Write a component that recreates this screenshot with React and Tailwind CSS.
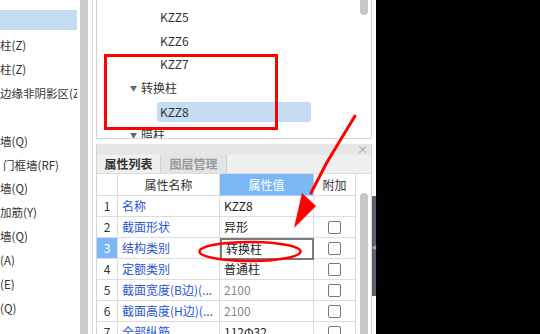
export default function App() {
  const leftItems = ["", "柱(Z)", "柱(Z)", "边缘非阴影区(Z", "", "墙(Q)", "门框墙(RF)", "墙(Q)", "加筋(Y)", "墙(Q)", "(A)", "(E)", "(Q)"];
  const rows = [
    { n: "1", name: "名称", val: "KZZ8", cb: false },
    { n: "2", name: "截面形状", val: "异形", cb: true },
    { n: "3", name: "结构类别", val: "转换柱", cb: true, sel: true },
    { n: "4", name: "定额类别", val: "普通柱", cb: true },
    { n: "5", name: "截面宽度(B边)(...", val: "2100", cb: true, gray: true },
    { n: "6", name: "截面高度(H边)(...", val: "2100", cb: true, gray: true },
    { n: "7", name: "全部纵筋", val: "112Φ32", cb: true },
  ];
  return (
    <div className="relative w-[540px] h-[334px] overflow-hidden bg-black font-['Noto_Sans_CJK_SC','Noto_Sans',sans-serif] text-[12px] text-[#333]">
      <div className="flex w-[376px] h-[334px] bg-white">
        {/* left list */}
        <div className="w-[80px] h-full overflow-hidden pt-[10px]">
          <div className="h-[23.2px] w-[77px]">
            <div className="h-[20px] w-full bg-[#c5dcf2]" />
          </div>
          {leftItems.slice(1).map((t, i) => (
            <div key={i} className="h-[23.9px] flex items-center w-[77px] overflow-hidden">
              <div className={`whitespace-nowrap leading-[18px] text-[11.5px] ${t.startsWith("门") ? "pl-[3px]" : ""}`}>
                {t}
              </div>
            </div>
          ))}
        </div>
        <div className="w-[8px] h-full bg-[#cbcbcb]" />
        <div className="w-[4px] h-full" />
        <div className="w-[4px] h-full border-l border-[#dcdcdc]" />
        {/* main */}
        <div className="w-[276px] h-full flex flex-col">
          {/* tree panel */}
          <div className="relative h-[139px] border-l border-r border-b border-[#d4d4d4] pt-[5px] overflow-hidden">
            <div className="absolute right-[3px] top-0 w-[8px] h-[15px] rounded-b-full bg-[#c8c8c8]" />
            {["KZZ5", "KZZ6", "KZZ7"].map((t) => (
              <div key={t} className="h-[23.7px] flex items-center pl-[63px]">{t}</div>
            ))}
            <div className="h-[23.7px] flex items-center pl-[33px]">
              <span className="text-[#666] text-[7px] mr-[4px]">▼</span>转换柱
            </div>
            <div className="h-[23.7px] flex items-center pl-[60px]">
              <div className="h-[20px] w-[154px] rounded-[3px] bg-[#c5dcf2] flex items-center pl-[3px]">KZZ8</div>
            </div>
            <div className="h-[23.7px] flex items-center pl-[33px]">
              <span className="text-[#666] text-[7px] mr-[4px]">▼</span>暗柱
            </div>
          </div>
          <div className="h-[5px]" />
          {/* property panel */}
          <div className="flex-1 flex flex-col border-l border-r border-[#d4d4d4] overflow-hidden">
            <div className="h-[11px] bg-[#e6e6e6] flex items-center justify-end pr-[3px] text-[#999] text-[11px] leading-[11px]">×</div>
            <div className="h-[22px] bg-[#f0f0f0] flex border-b border-[#dcdcdc]">
              <div className="w-[63px] flex items-center justify-center font-bold text-[#333]">属性列表</div>
              <div className="w-[67px] flex items-center justify-center font-bold text-[#999] bg-[#e4e4e4] border-l border-r border-[#cfcfcf]">图层管理</div>
            </div>
            <div className="flex flex-1">
              <div className="w-[259px] flex flex-col">
                <div className="grid grid-cols-[21px_102px_94px_42px] h-[22px]">
                  <div className="border-r border-b border-[#dcdcdc]" />
                  <div className="border-r border-b border-[#dcdcdc] flex items-center justify-center">属性名称</div>
                  <div className="border-r border-b border-[#a9cdf5] bg-[#7cb8f5] text-white flex items-center justify-center">属性值</div>
                  <div className="border-r border-b border-[#dcdcdc] flex items-center justify-center">附加</div>
                </div>
                {rows.map((r) => (
                  <div key={r.n} className="grid grid-cols-[21px_102px_94px_42px] h-[21px]">
                    <div className={`border-r border-b border-[#dcdcdc] flex items-center justify-center ${r.sel ? "bg-[#7cb8f5] text-white" : ""}`}>{r.n}</div>
                    <div className="border-r border-b border-[#dcdcdc] flex items-center pl-[4px] text-[#2a56d6] whitespace-nowrap overflow-hidden">{r.name}</div>
                    <div className={`flex items-center pl-[4px] ${r.sel ? "border-2 border-[#7a7a7a] mb-[-1px] relative" : "border-r border-b border-[#dcdcdc]"} ${r.gray ? "text-[#888]" : "text-[#222]"}`}>{r.val}</div>
                    <div className="border-r border-b border-[#dcdcdc] flex items-center justify-center">
                      {r.cb && <div className="w-[13px] h-[13px] rounded-[2px] border border-[#777] bg-white" />}
                    </div>
                  </div>
                ))}
              </div>
              <div className="w-[15px] relative">
                <div className="absolute left-[4px] top-[19px] w-[8px] h-[200px] rounded-t-full bg-[#c8c8c8]" />
              </div>
            </div>
          </div>
        </div>
        <div className="relative w-[4px] h-full">
          <div className="absolute top-[196px] left-0 w-[4px] h-[100px] bg-[#5a6470] flex items-center justify-center">
            <span className="text-[#aab0b8] text-[5px] leading-[5px]">◀</span>
          </div>
        </div>
      </div>
      <svg className="absolute inset-0 pointer-events-none" width="540" height="334" viewBox="0 0 540 334">
        <rect x="105.5" y="55.5" width="171" height="73" fill="none" stroke="#ff0000" strokeWidth="3" />
        <ellipse cx="250" cy="251.5" rx="50.5" ry="9.5" fill="none" stroke="#ff0000" strokeWidth="2.5" />
        <polyline points="355,116 341,139 326,164 311,193" fill="none" stroke="#ff0000" strokeWidth="3" strokeLinecap="round" />
        <polygon points="302,193 316,206 294,228" fill="#ff0000" />
      </svg>
    </div>
  );
}
